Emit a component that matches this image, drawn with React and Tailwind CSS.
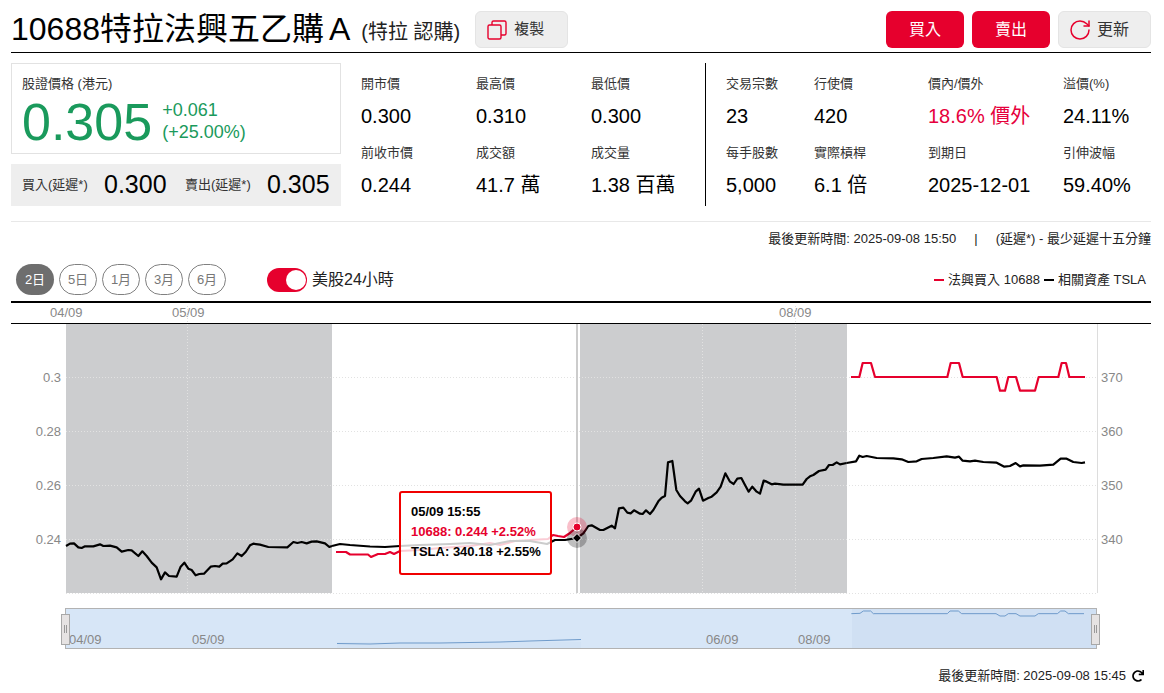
import React from 'react';
import { RotateCw } from 'lucide-react';
import { FaRedo } from 'react-icons/fa';

const leftStats = [
  ['開市價', '0.300'], ['最高價', '0.310'], ['最低價', '0.300'],
  ['前收市價', '0.244'], ['成交額', '41.7 萬'], ['成交量', '1.38 百萬'],
];

const rightStats = [
  ['交易宗數', '23'], ['行使價', '420'], ['價內/價外', '18.6% 價外', true], ['溢價(%)', '24.11%'],
  ['每手股數', '5,000'], ['實際槓桿', '6.1 倍'], ['到期日', '2025-12-01'], ['引伸波幅', '59.40%'],
];

// traced from 3x crops: [x, y] in crop pixels, origin is the crop corner
const trace = (pts, ox, oy) => pts.map(([x, y]) => `${ox + x / 3},${oy + y / 3}`).join(' ');

const tslaA = trace([[48,198],[60,191],[72,190],[85,202],[95,204],[105,199],[130,199],[150,193],[160,198],[180,197],[200,202],[215,215],[235,210],[245,211],[265,228],[277,214],[290,228],[305,248],[320,262],[333,298],[345,277],[357,288],[380,290],[392,260],[403,248],[415,266],[425,270],[437,286],[448,282],[462,281],[482,260],[495,258],[508,260],[518,251],[530,250],[548,238],[562,220],[575,228],[587,216],[600,196],[610,191],[630,194],[655,201],[712,202],[730,186],[742,189],[755,186],[770,190],[785,185],[800,184],[825,190],[838,201],[846,198]], 50, 480);
const tslaB = '332,546 340,544 350,545 370,546.5 385,547 400,546 420,545 450,544 470,543 490,545 510,541 530,541 547,544 555,540 565,540 577,538';
const tslaC = trace([[21,594],[40,580],[55,558],[65,556],[90,570],[100,570],[125,557],[135,565],[147,505],[160,503],[172,518],[182,520],[192,511],[210,521],[218,522],[228,511],[240,522],[250,510],[265,484],[275,473],[285,468],[294,367],[307,363],[319,450],[330,468],[345,484],[353,490],[363,482],[377,455],[387,446],[399,482],[415,474],[425,470],[440,457],[452,440],[466,400],[480,425],[491,432],[502,416],[514,414],[525,435],[536,455],[547,440],[560,455],[570,461],[581,422],[590,425],[605,433],[615,431],[640,434],[698,434],[710,417],[720,409],[730,405],[747,393],[767,389],[777,375],[788,375],[800,367],[810,373],[830,369]], 570, 340);
const tslaD = trace([[20,369],[48,364],[58,347],[68,351],[80,348],[110,354],[160,355],[185,358],[205,366],[230,364],[245,357],[280,354],[320,349],[345,353],[357,350],[368,362],[390,364],[405,362],[430,366],[470,368],[493,380],[510,378],[527,369],[540,379],[550,376],[600,377],[640,374],[662,356],[680,356],[700,366],[725,369],[735,367]], 840, 340);
const warrantA = '336,552 346,552 350,554.5 368,554.5 371,557 378,554 385,554 390,552 394,554 400,551 420,550 440,548 470,546 490,543 500,545 515,541 530,540 548,539 553,535 558,536 564,537 570,533 577,527';
const warrantB = trace([[33,111],[58,111],[68,69],[93,69],[105,111],[322,111],[332,69],[357,69],[368,111],[470,111],[480,152],[495,152],[505,111],[528,111],[540,152],[585,152],[596,111],[655,111],[665,69],[678,69],[688,111],[735,111]], 840, 340);
const navA = '337,643.5 370,644 400,643 440,643 470,642.5 500,642 530,641 581,639.5';
const navB = trace([[634,41],[660,40],[670,33],[692,33],[700,41],[922,41],[930,33],[955,33],[965,41],[1068,41],[1080,48],[1095,48],[1105,41],[1128,41],[1140,48],[1185,48],[1195,41],[1252,41],[1262,33],[1275,33],[1285,41],[1332,41]], 640, 600);

function StatCell({ label, value, red }) {
  return (
    <div>
      <div className="text-[13px] leading-5 text-[#333]">{label}</div>
      <div className={`mt-[12px] text-[20px] leading-5 ${red ? 'text-[#e6003c]' : 'text-black'}`}>{value}</div>
    </div>
  );
}

function GrayButton({ children, className }) {
  return (
    <button className={`h-[37px] flex items-center rounded-md border border-[#e4e4e4] bg-[#eeeeee] text-[#333] ${className}`}>
      {children}
    </button>
  );
}

function PriceChart() {
  const gridYs = [377, 431, 485, 539];
  return (
    <svg width="1140" height="351" viewBox="11 301 1140 351" className="block">
      <rect x="11" y="301" width="1140" height="2" fill="#000" />
      <rect x="11" y="323" width="1140" height="1" fill="#000" />
      <g fontSize="13" fill="#888">
        <text x="50" y="317">04/09</text>
        <text x="172" y="317">05/09</text>
        <text x="779" y="317">08/09</text>
      </g>

      <rect x="66" y="324" width="266" height="269" fill="#cccdcf" />
      <rect x="580" y="324" width="267" height="269" fill="#cccdcf" />
      <g stroke="#e2e2e2" strokeDasharray="1 2">
        <line x1="187.5" y1="306" x2="187.5" y2="593" />
        <line x1="702.5" y1="324" x2="702.5" y2="593" />
        <line x1="795.5" y1="306" x2="795.5" y2="593" />
        {gridYs.map((y) => (
          <line key={y} x1="66" y1={y + 0.5} x2="1097" y2={y + 0.5} />
        ))}
        <line x1="66" y1="593.5" x2="1097" y2="593.5" />
      </g>
      <line x1="1097.5" y1="324" x2="1097.5" y2="593" stroke="#dddddd" />
      <line x1="577" y1="324" x2="577" y2="593" stroke="#cccccc" strokeWidth="2" />

      <g fontSize="13" fill="#888">
        <text x="61" y="382" textAnchor="end">0.3</text>
        <text x="61" y="436" textAnchor="end">0.28</text>
        <text x="61" y="490" textAnchor="end">0.26</text>
        <text x="61" y="544" textAnchor="end">0.24</text>
        <text x="1101" y="382">370</text>
        <text x="1101" y="436">360</text>
        <text x="1101" y="490">350</text>
        <text x="1101" y="544">340</text>
      </g>

      <g fill="none" strokeWidth="2.2" strokeLinejoin="round">
        <polyline points={warrantA} stroke="#e6002d" />
        <polyline points={warrantB} stroke="#e6002d" />
        <polyline points={tslaA} stroke="#000" />
        <polyline points={tslaB} stroke="#000" />
        <polyline points={tslaC} stroke="#000" />
        <polyline points={tslaD} stroke="#000" />
      </g>

      <circle cx="577" cy="527" r="10" fill="#e6002d" opacity="0.25" />
      <circle cx="577" cy="538" r="10" fill="#000" opacity="0.25" />
      <circle cx="577" cy="527" r="4" fill="#e6002d" stroke="#fff" />
      <path d="M577 533.5 L581.5 538 L577 542.5 L572.5 538 Z" fill="#000" stroke="#fff" />

      <rect x="65.5" y="608.5" width="1031" height="40" fill="#d7e6f7" stroke="#b2b2b2" />
      <rect x="852" y="609" width="244" height="39" fill="#d0e0f3" />
      <rect x="337" y="642" width="244" height="6" fill="#d3e3f5" />
      <polyline points={navA} fill="none" stroke="#6f9bcb" />
      <polyline points={navB} fill="none" stroke="#6f9bcb" />
      <g fontSize="13" fill="#888">
        <text x="69" y="644">04/09</text>
        <text x="192" y="644">05/09</text>
        <text x="706" y="644">06/09</text>
        <text x="798" y="644">08/09</text>
      </g>
      {[61.5, 1091.5].map((x) => (
        <g key={x}>
          <rect x={x} y="614.5" width="8" height="30" fill="#e6e3e3" stroke="#a8a8a8" />
          <line x1={x + 3} y1="625" x2={x + 3} y2="633" stroke="#999" />
          <line x1={x + 5} y1="625" x2={x + 5} y2="633" stroke="#999" />
        </g>
      ))}
    </svg>
  );
}

export default function App() {
  return (
    <div className="w-[1164px] pl-[11px] pr-[13px] bg-white text-black font-['Liberation_Sans','Noto_Sans_CJK_TC',sans-serif]">
      <header className="h-[53px] flex items-start border-b border-black pt-[11px]">
        <h1 className="text-[32px] leading-[37px] font-normal whitespace-nowrap [word-spacing:-4px]">10688特拉法興五乙購 A</h1>
        <span className="ml-[11px] mt-[9px] text-[20px] leading-6 text-[#222] whitespace-nowrap">(特拉 認購)</span>
        <GrayButton className="ml-[15px] w-[93px] pl-[11px] gap-[7px] text-[15px]">
          <svg width="20" height="20" viewBox="0 0 20 20" fill="none" stroke="#e6002d" strokeWidth="1.4">
            <rect x="1" y="5" width="13" height="14" rx="1.5" />
            <path d="M5 5V2.5A1.5 1.5 0 0 1 6.5 1h11A1.5 1.5 0 0 1 19 2.5v11a1.5 1.5 0 0 1-1.5 1.5H14" />
          </svg>
          複製
        </GrayButton>
        <div className="ml-auto flex gap-2">
          <button className="w-[78px] h-[37px] rounded-md bg-[#e6002d] text-white text-[16px]">買入</button>
          <button className="w-[78px] h-[37px] rounded-md bg-[#e6002d] text-white text-[16px]">賣出</button>
          <GrayButton className="w-[93px] pl-[9px] gap-[5px] text-[16px]">
            <RotateCw size={24} strokeWidth={1.5} color="#e6002d" />
            更新
          </GrayButton>
        </div>
      </header>

      <section className="mt-[10px] flex h-[143px]">
        <div className="w-[330px]">
          <div className="h-[91px] border border-[#e2e2e2] px-[10px] pt-[10px]">
            <div className="text-[13px] leading-5 text-[#333]">股證價格 (港元)</div>
            <div className="flex items-center mt-[-2px]">
              <div className="text-[52px] leading-[60px] text-[#1a9a5c]">0.305</div>
              <div className="ml-[10px] mb-[2px] text-[18px] leading-[22px] text-[#1a9a5c]">
                <div>+0.061</div>
                <div>(+25.00%)</div>
              </div>
            </div>
          </div>
          <div className="mt-[10px] h-[42px] bg-[#eeeeee] flex items-center pl-[11px]">
            <span className="w-[82px] text-[13px] text-[#333]">買入(延遲*)</span>
            <span className="w-[81px] text-[25px]">0.300</span>
            <span className="w-[82px] text-[13px] text-[#333]">賣出(延遲*)</span>
            <span className="text-[25px]">0.305</span>
          </div>
        </div>

        <div className="w-[344px] ml-[20px] pt-[11px] grid grid-cols-[115px_115px_115px] gap-y-[17px] content-start">
          {leftStats.map(([label, value]) => (
            <StatCell key={label} label={label} value={value} />
          ))}
        </div>

        <div className="flex-1 border-l border-black pl-[20px] pt-[11px] grid grid-cols-[88px_114px_135px_1fr] gap-y-[17px] content-start">
          {rightStats.map(([label, value, red]) => (
            <StatCell key={label} label={label} value={value} red={red} />
          ))}
        </div>
      </section>

      <div className="mt-[15px] border-t border-[#e8e8e8] pt-[9px] text-right text-[13px] leading-4 text-[#222] whitespace-pre">
        最後更新時間: 2025-09-08 15:50{'     |     '}(延遲*) - 最少延遲十五分鐘
      </div>

      <div className="mt-[17px] h-[31px] flex items-center pl-[5px]">
        <div className="flex gap-[5px]">
          {['2日', '5日', '1月', '3月', '6月'].map((t, i) => (
            <button
              key={t}
              className={`w-[38px] h-[31px] rounded-full text-[13px] ${i === 0 ? 'bg-[#6e6e6e] text-white' : 'border border-[#808080] text-[#777]'}`}
            >
              {t}
            </button>
          ))}
        </div>
        <div className="ml-[41px] w-[40px] h-[24px] rounded-full bg-[#e6002d] flex items-center justify-end pr-[1px]">
          <div className="w-[20px] h-[20px] rounded-full bg-white" />
        </div>
        <span className="ml-[5px] text-[16px] text-[#222]">美股24小時</span>
        <div className="ml-auto pr-[5px] flex items-center text-[13px] text-[#222]">
          <span className="w-[10px] h-[2px] bg-[#e6002d] mr-[4px]" />
          法興買入 10688
          <span className="w-[10px] h-[2px] bg-black ml-[4px] mr-[4px]" />
          相關資產 TSLA
        </div>
      </div>

      <div className="relative mt-[6px]">
        <PriceChart />
        <div className="absolute left-[388px] top-[190px] w-[153px] h-[84px] rounded-[3px] border-2 border-[#f00000] bg-white/80 pl-[10px] pt-[9px] text-[13px] leading-[20px] font-bold whitespace-nowrap">
          <div>05/09 15:55</div>
          <div className="text-[#e6002d]">10688: 0.244 +2.52%</div>
          <div>TSLA: 340.18 +2.55%</div>
        </div>
      </div>

      <div className="mt-[14px] pr-[7px] flex items-center justify-end gap-[6px] text-[13px] text-[#222]">
        最後更新時間: 2025-09-08 15:45
        <FaRedo size={12} color="#000" />
      </div>
    </div>
  );
}
